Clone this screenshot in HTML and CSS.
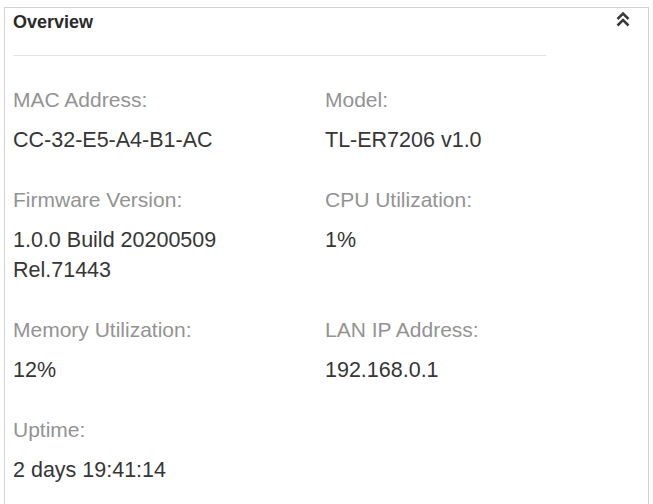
FILE: index.html
```html
<!DOCTYPE html>
<html>
<head>
<meta charset="utf-8">
<link rel="stylesheet" href="styles.css">
</head>
<body>
<div class="panel">
  <div class="panel-header">
    <span class="panel-title">Overview</span>
    <svg class="collapse-icon" width="14" height="16" viewBox="0 0 14 16" aria-hidden="true">
      <path d="M1.5 8 L7 2.5 L12.5 8" fill="none" stroke="#3a3a3a" stroke-width="2.5" stroke-linejoin="miter"/>
      <path d="M1.5 14.5 L7 9 L12.5 14.5" fill="none" stroke="#3a3a3a" stroke-width="2.5" stroke-linejoin="miter"/>
    </svg>
  </div>
  <div class="divider"></div>
  <div class="info-grid">
    <div class="field">
      <div class="label">MAC Address:</div>
      <div class="value">CC-32-E5-A4-B1-AC</div>
    </div>
    <div class="field">
      <div class="label">Model:</div>
      <div class="value">TL-ER7206 v1.0</div>
    </div>
    <div class="field">
      <div class="label">Firmware Version:</div>
      <div class="value">1.0.0 Build 20200509<br>Rel.71443</div>
    </div>
    <div class="field">
      <div class="label">CPU Utilization:</div>
      <div class="value">1%</div>
    </div>
    <div class="field">
      <div class="label">Memory Utilization:</div>
      <div class="value">12%</div>
    </div>
    <div class="field">
      <div class="label">LAN IP Address:</div>
      <div class="value">192.168.0.1</div>
    </div>
    <div class="field">
      <div class="label">Uptime:</div>
      <div class="value">2 days 19:41:14</div>
    </div>
  </div>
</div>
</body>
</html>
```

FILE: styles.css
```css
html, body {
  margin: 0;
  padding: 0;
  background: #ffffff;
}

body {
  font-family: "Liberation Sans", Arial, sans-serif;
  height: 504px;
  overflow: hidden;
}

.panel {
  margin: 7px 4px 0 4px;
  border: 1px solid #d2d2d2;
  border-bottom: none;
  min-height: 520px;
  box-sizing: border-box;
}

.panel-header {
  display: flex;
  justify-content: space-between;
  align-items: flex-start;
  padding: 2px 18px 0 8px;
}

.panel-title {
  font-size: 18px;
  line-height: 24px;
  font-weight: bold;
  color: #2a2a2a;
}

.collapse-icon {
  display: block;
  margin-top: 1px;
}

.divider {
  margin: 21px 0 0 8px;
  width: 533px;
  height: 1px;
  background: #e2e2e2;
}

.info-grid {
  display: grid;
  grid-template-columns: 312px 1fr;
  row-gap: 30px;
  padding: 29px 0 0 8px;
}

.label {
  font-size: 21px;
  line-height: 30px;
  color: #939393;
}

.value {
  margin-top: 10px;
  font-size: 21.5px;
  line-height: 30px;
  color: #363636;
}
```
